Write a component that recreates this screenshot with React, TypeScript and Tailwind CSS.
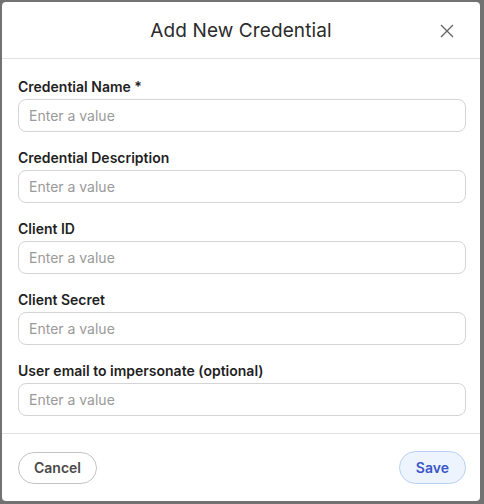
import React from "react";

const fields = [
  "Credential Name *",
  "Credential Description",
  "Client ID",
  "Client Secret",
  "User email to impersonate (optional)",
];

export default function App() {
  return (
    <div
      className="w-[484px] h-[504px] bg-[#727272] pt-[2px] pl-[2px] pr-[4px] pb-[3px]"
      style={{ fontFamily: "Inter, 'Noto Sans', sans-serif" }}
    >
      <div className="w-full h-full bg-white rounded-[4px] flex flex-col">
        <div className="h-[57px] border-b border-[#e2e2e2] flex items-center justify-center relative pt-[2px]">
          <div className="text-[19px] text-[#2b2b2b] tracking-[0.1px]">Add New Credential</div>
          <button className="absolute right-[25px] top-[21px] w-[16px] h-[16px] flex items-center justify-center text-[#666]">
            <svg width="14" height="14" viewBox="0 0 14 14" fill="none" stroke="currentColor" strokeWidth="1.4">
              <path d="M1 1L13 13M13 1L1 13" />
            </svg>
          </button>
        </div>
        <div className="flex flex-col pl-[16px] pr-[14px] pt-[18px] pb-[17px] gap-[16px] border-b border-[#e2e2e2]">
          {fields.map((f) => (
            <div key={f} className="flex flex-col gap-[2px]">
              <label className="text-[14px] leading-[20px] font-semibold text-[#1f1f1f]">{f}</label>
              <input
                placeholder="Enter a value"
                className="h-[33px] w-full rounded-[8px] border border-[#d4d4d4] px-[10px] text-[14px] text-[#333] placeholder:text-[#9a9a9a] outline-none"
              />
            </div>
          ))}
        </div>
        <div className="flex-1 flex items-center justify-between pl-[16px] pr-[14px]">
          <button className="h-[32px] px-[15px] rounded-full border border-[#c4c4c4] text-[14px] font-semibold text-[#4a4a4a] bg-white">
            Cancel
          </button>
          <button className="h-[33px] px-[16px] rounded-full border border-[#b9d0f5] bg-[#eef4fe] text-[14px] font-semibold text-[#3a56c9]">
            Save
          </button>
        </div>
      </div>
    </div>
  );
}
